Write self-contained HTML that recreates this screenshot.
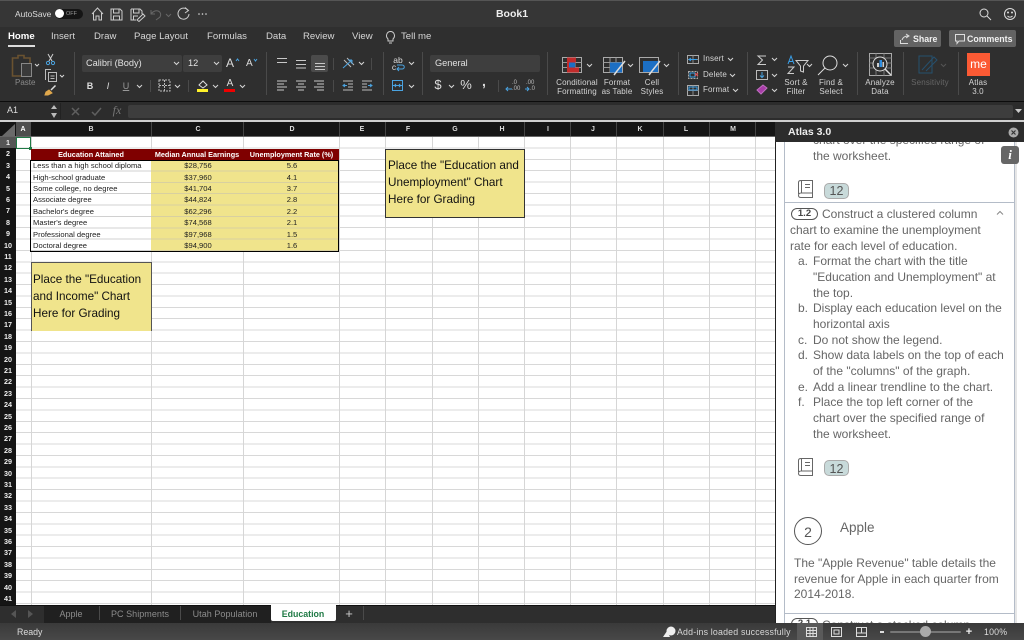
<!DOCTYPE html>
<html><head><meta charset="utf-8"><title>Book1</title>
<style>
html,body{margin:0;padding:0;background:#fff}
#p{position:relative;width:1024px;height:640px;overflow:hidden;font-family:"Liberation Sans",sans-serif;background:#fff}
#p div,#p span.a,#p svg{position:absolute}
.t{position:absolute;white-space:nowrap;line-height:12px;transform:translateY(-6px)}
.c{transform:translate(-50%,-6px);text-align:center}
.rb{color:#d8d8d8;font-size:9.6px}
.tab{color:#d6d6d6;font-size:9.6px;letter-spacing:0}
.lb{color:#d4d4d4;font-size:8px;letter-spacing:.15px}
.sep{width:1px;background:#4a4a4a}
.vl{top:137px;height:468px;width:1px;background:#d6d6d6}
.hd{color:#ddd;font-size:7px;font-weight:bold;top:129.5px}
.rn{left:0;width:16px;text-align:center;color:#eee;font-size:7.2px;font-weight:bold;line-height:11.4px;height:11.4px}
.b{color:#222;font-size:7.6px;left:33px}
.m{color:#222;font-size:7.6px}
.th{color:#fff;font-size:7.25px;font-weight:bold;top:155px}
.n{color:#111;font-size:11.7px}
.q{color:#666;font-size:12px;letter-spacing:0}
</style></head><body><div id="p">

<!-- title bar -->
<div style="left:0;top:0;width:1024px;height:27px;background:#363636;border-top:1px solid #555;box-sizing:border-box"></div>
<span class="t" style="left:15px;top:14px;color:#ddd;font-size:8.4px">AutoSave</span>
<div style="left:55px;top:9px;width:28px;height:10px;border-radius:5px;background:#151515"></div>
<div style="left:55px;top:9px;width:9px;height:9px;border-radius:5px;background:#fff"></div>
<span class="t" style="left:66px;top:14px;color:#999;font-size:5.5px">OFF</span>
<svg style="left:90px;top:5px" width="125" height="18" fill="none" stroke="#ccc" stroke-width="1">
<path d="M2 9L7.5 3L13 9M3.5 8V15H6V11H9V15H11.5V8"/>
<path d="M21 4H30L32 6V15H21ZM23.5 4V8H29V4M23.5 15V11H29.5V15"/>
<path d="M41 4H50L52 6V9M41 4V15H46M43.5 4V8H49V4M43.5 15V11H48M47 15L53 9L55 11L49 16.5Z"/>
<path d="M61 5V9H65M61 9C65 3 73 6 70 12L66 15" stroke="#666"/>
<path d="M76 9L78.5 11.5L81 9" stroke="#666"/>
<path d="M98 5.5A5.5 5.5 0 1 0 99 9M95 2.5L98.5 5.5L95 8"/>
<circle cx="109" cy="9" r=".8" fill="#ddd" stroke="none"/><circle cx="112.500" cy="9" r=".8" fill="#ddd" stroke="none"/><circle cx="116" cy="9" r=".8" fill="#ddd" stroke="none"/>
</svg>
<span class="t c" style="left:512px;top:14px;color:#eee;font-size:10.5px;font-weight:bold">Book1</span>
<svg style="left:976px;top:5px" width="44" height="18" fill="none" stroke="#ddd" stroke-width="1">
<circle cx="8" cy="8" r="4"/><path d="M11 11L15 15"/>
<circle cx="34" cy="9" r="5.5"/><path d="M31.5 11C33 12.5 35 12.5 36.5 11"/><circle cx="32" cy="7.5" r=".5"/><circle cx="36" cy="7.5" r=".5"/>
</svg>

<!-- ribbon -->
<div style="left:0;top:27px;width:1024px;height:74px;background:#2f2f2f"></div>
<div style="left:0;top:101px;width:1024px;height:1px;background:#0c0c0c"></div>
<span class="t tab" style="left:8px;top:37px;color:#fff;font-weight:bold">Home</span>
<div style="left:8px;top:45px;width:27px;height:2px;background:#ddd"></div>
<span class="t tab" style="left:51px;top:37px">Insert</span>
<span class="t tab" style="left:94px;top:37px">Draw</span>
<span class="t tab" style="left:134px;top:37px">Page Layout</span>
<span class="t tab" style="left:207px;top:37px">Formulas</span>
<span class="t tab" style="left:266px;top:37px">Data</span>
<span class="t tab" style="left:303px;top:37px">Review</span>
<span class="t tab" style="left:352px;top:37px">View</span>
<svg style="left:385px;top:30px" width="11" height="14" fill="none" stroke="#ccc"><path d="M3 9C0 6 2 1.5 5.5 1.5S11 6 8 9V11H3ZM4 13H7"/></svg>
<span class="t tab" style="left:401px;top:37px">Tell me</span>

<div style="left:894px;top:30px;width:47px;height:17px;background:#636363;border-radius:2px"></div>
<span class="t" style="left:913px;top:39px;color:#f0f0f0;font-size:8.8px;font-weight:bold">Share</span>
<svg style="left:899px;top:33px" width="12" height="12" fill="none" stroke="#ddd"><path d="M1.5 7V10.5H9M3 7C4 4 6 3 9 3M7 1L10 3L7 5"/></svg>
<div style="left:949px;top:30px;width:67px;height:17px;background:#636363;border-radius:2px"></div>
<span class="t" style="left:967px;top:39px;color:#f0f0f0;font-size:8.8px;font-weight:bold">Comments</span>
<svg style="left:954px;top:33px" width="12" height="12" fill="none" stroke="#ddd"><path d="M1.5 1.5H10.5V8H5L3 10.5V8H1.5Z"/></svg>

<!-- separators -->
<div class="sep" style="left:74px;top:52px;height:43px"></div>
<div class="sep" style="left:266px;top:52px;height:43px"></div>
<div class="sep" style="left:383px;top:52px;height:43px"></div>
<div class="sep" style="left:422px;top:52px;height:43px"></div>
<div class="sep" style="left:547px;top:52px;height:43px"></div>
<div class="sep" style="left:678px;top:52px;height:43px"></div>
<div class="sep" style="left:747px;top:52px;height:43px"></div>
<div class="sep" style="left:857px;top:52px;height:43px"></div>
<div class="sep" style="left:903px;top:52px;height:43px"></div>
<div class="sep" style="left:958px;top:52px;height:43px"></div>
<div class="sep" style="left:150px;top:80px;height:12px"></div>
<div class="sep" style="left:188px;top:80px;height:12px"></div>
<div class="sep" style="left:333px;top:58px;height:12px"></div>
<div class="sep" style="left:333px;top:80px;height:12px"></div>
<div class="sep" style="left:371px;top:58px;height:12px"></div>
<div class="sep" style="left:498px;top:80px;height:12px"></div>

<!-- clipboard -->
<svg style="left:10px;top:53px" width="60" height="45" fill="none" stroke="#a9a9a9" stroke-width="1">
<path d="M2.500 5H8V2.500H14V5H20V23H2.500Z" stroke="#6a5230" stroke-width="1.6"/>
<rect x="11.500" y="10.500" width="10" height="13" fill="#3a3a3a" stroke="#888"/>
<path d="M38 1L42 8M43 1L39 8" stroke="#cfcfcf"/><circle cx="38" cy="10" r="1.6" stroke="#4aa3e0"/><circle cx="43" cy="10" r="1.6" stroke="#4aa3e0"/>
<path d="M35.500 27V16.500H41M38.500 19.500H46.500V28.500H38.500ZM40.500 23H44.500M40.500 25.500H44.500" stroke="#bbb"/>
<path d="M36 39L39 37L42 40L38 42H35Z" fill="#e0a84c" stroke="#e0a84c"/><path d="M41 37L45.500 32.500" stroke="#ddd" stroke-width="1.500"/>
</svg>
<span class="t" style="left:15px;top:83px;color:#8a8a8a;font-size:8px">Paste</span>

<!-- font boxes -->
<div style="left:82px;top:55px;width:100px;height:17px;background:#3e3e3e;border-radius:2px"></div>
<div style="left:183px;top:55px;width:39px;height:17px;background:#3e3e3e;border-radius:2px"></div>
<span class="t" style="left:86px;top:63px;color:#e2e2e2;font-size:9.2px">Calibri (Body)</span>
<span class="t" style="left:188px;top:63px;color:#e2e2e2;font-size:9.2px">12</span>
<span class="t" style="left:226px;top:63px;color:#ddd;font-size:12px">A</span>
<span class="t" style="left:246px;top:64px;color:#ddd;font-size:10px">A</span>
<div style="left:311px;top:55px;width:17px;height:17px;background:#4b4b4b;border-radius:2px"></div>
<svg style="left:0;top:0;pointer-events:none" width="1024" height="102" fill="none" stroke="#d5d5d5" stroke-width="1">
<!-- chevrons -->
<path d="M35 64l2 2 2-2M60 75l2 2 2-2M174 62l2.500 2.500 2.500-2.500M214 62l2.500 2.500 2.500-2.500M137 85l2.500 2.500 2.500-2.500M175 85l2.500 2.500 2.500-2.500M213 85l2.500 2.500 2.500-2.500M240 85l2.500 2.500 2.500-2.500M359 62l2.500 2.500 2.500-2.500M409 62l2.500 2.500 2.500-2.500M409 85l2.500 2.500 2.500-2.500M449 85l2.500 2.500 2.500-2.500M533 62l2.500 2.500 2.500-2.500M587 64l2.500 2.500 2.500-2.500M628 64l2.500 2.500 2.500-2.500M664 64l2.500 2.500 2.500-2.500M728 58l2.500 2.500 2.500-2.500M730 74l2.500 2.500 2.500-2.500M733 89l2.500 2.500 2.500-2.500M772 58l2.500 2.500 2.500-2.500M772 74l2.500 2.500 2.500-2.500M772 89l2.500 2.500 2.500-2.500M807 64l2.500 2.500 2.500-2.500M843 64l2.500 2.500 2.500-2.500"/>
<path d="M236 61l1.500-2 1.500 2M254 59l1.500 2 1.500-2" stroke="#4aa3e0"/>
<path d="M941 64l2.500 2.500 2.500-2.500" stroke="#555"/>
<!-- alignment -->
<g stroke="#c8c8c8"><path d="M277 58.500H287M277 62.500H287M296 60.500H306M296 64.500H306M296 68H306M315 63.500H325M315 66.500H325M315 69.500H325M277 81H287M277 84H284M277 87H287M277 90H284M296 81H306M298 84H304M296 87H306M298 90H304M314 81H324M317 84H324M314 87H324M317 90H324"/></g>
<!-- borders -->
<path stroke-dasharray="2 1" d="M159 80H170V91H159ZM159 85.500H170M164.500 80V91" stroke="#bbb"/>
<!-- indents -->
<path d="M343 81H353M343 90H353M348 84H353M348 87H353" stroke="#bbb"/><path d="M343 85.500H347M345 84L343 85.500L345 87" stroke="#4aa3e0"/>
<path d="M362 81H372M362 90H372M362 84H367M362 87H367" stroke="#bbb"/><path d="M368 85.500H372M370 84L372 85.500L370 87" stroke="#4aa3e0"/>
<!-- orientation -->
<path d="M344 60L351 67M347 58L354 65" stroke="#bbb"/><path d="M343 68L352 60M352 60V64M352 60H348" stroke="#4aa3e0"/>
<!-- wrap / merge -->
<path d="M397 65H402C405 65 405 69 402 69H397M399 67L397 69L399 71" stroke="#4aa3e0"/>
<path d="M392.500 80.500H402.500V90.500H392.500ZM392.500 85.500H402.500M394.500 85.500L396 84M394.500 85.500L396 87M400.500 85.500L399 84M400.500 85.500L399 87" stroke="#4aa3e0"/>
<!-- decimal -->
<path d="M506 89H512M508 87L506 89L508 91M525 89H529M527 87L529 89L527 91" stroke="#4aa3e0"/>
<!-- conditional -->
<rect x="562.500" y="57.500" width="19" height="15" stroke="#aaa"/><path d="M562.500 62.500H581.500M562.500 67.500H581.500M569 57.500V72.500M575 57.500V72.500" stroke="#999"/>
<rect x="567" y="57.500" width="9" height="5" fill="#c22b2b" stroke="none"/><rect x="567" y="67.500" width="12" height="5" fill="#c22b2b" stroke="none"/><rect x="567" y="62.500" width="2" height="5" fill="#c22b2b" stroke="none"/><rect x="569" y="62.500" width="6" height="5" fill="#1c6fc4" stroke="none"/>
<!-- format as table -->
<rect x="603.500" y="57.500" width="19" height="15" stroke="#aaa"/><path d="M603.500 62.500H622.500M603.500 67.500H622.500M610 57.500V72.500M616 57.500V72.500" stroke="#999"/>
<rect x="610" y="62.500" width="12" height="10" fill="#1c6fc4" stroke="none"/>
<path d="M625 61L617 71M617 71L614 75" stroke="#ddd" stroke-width="1.500"/>
<!-- cell styles -->
<rect x="639.500" y="57.500" width="19" height="15" stroke="#aaa"/><rect x="643" y="61" width="15" height="11" fill="#1c6fc4" stroke="none"/>
<path d="M660 61L652 71M652 71L649 75" stroke="#ddd" stroke-width="1.500"/>
<!-- insert delete format -->
<rect x="687.500" y="55.500" width="11" height="8" stroke="#aaa"/><path d="M687.500 59.500H698.500M693 55.500V63.500" stroke="#888"/><path d="M689 59.500H697M691 58L689 59.500L691 61" stroke="#3aa0ea"/>
<rect x="688.500" y="71.500" width="9" height="7" stroke="#aaa" stroke-dasharray="2 1"/><rect x="690" y="73" width="5" height="4" stroke="#3aa0ea"/><path d="M695 73L698 76M698 73L695 76" stroke="#e05050"/>
<rect x="687.500" y="85.500" width="11" height="10" stroke="#aaa"/><path d="M687.500 90.500H698.500M693 85.500V95.500" stroke="#888"/><path d="M689 87H697V90H689Z" stroke="#3aa0ea"/>
<!-- sigma etc -->
<path d="M766 56H758L762.500 60L758 64.500H766" stroke="#ccc"/>
<rect x="756.500" y="70.500" width="11" height="9" stroke="#bbb"/><path d="M762 72V77M760 75.500L762 77.500L764 75.500" stroke="#4aa3e0"/>
<path d="M757 90L763 85L767 88L761 94Z" fill="#a83ca8" stroke="#c070c0"/>
<!-- sort -->
<path d="M788 64L791 56L794 64M789 61.500H793" stroke="#3aa0ea"/><path d="M788 67H794L788 73.500H794" stroke="#ccc"/><path d="M796 60.500H808L803.500 66V72L800.500 71V66Z" stroke="#ccc"/>
<!-- find -->
<circle cx="830" cy="63" r="7" stroke="#ddd"/><path d="M825 68L818 75" stroke="#ddd"/>
<!-- analyze -->
<rect x="869.500" y="53.500" width="22" height="22" stroke="#aaa"/><path d="M869.500 58H891.500M869.500 63H891.500M869.500 68H891.500M876 53.500V75.500M884 53.500V75.500" stroke="#777"/>
<circle cx="880" cy="64" r="7" stroke="#ddd" fill="#2f2f2f"/><rect x="877" y="63" width="2" height="4" fill="#ccc" stroke="none"/><rect x="879.500" y="60" width="2.500" height="7" fill="#2f8ee0" stroke="none"/><rect x="882.500" y="62" width="1.500" height="5" fill="#ccc" stroke="none"/><path d="M885 69L891 75" stroke="#ddd" stroke-width="1.500"/>
<!-- sensitivity -->
<path d="M919 56H932V73H919ZM922 70L934 57L937 60L926 71" stroke="#26506e"/>
</svg>
<span class="t c" style="left:398px;top:60px;color:#ddd;font-size:8.500px">ab</span>
<span class="t c" style="left:394px;top:67px;color:#ddd;font-size:8.500px">c</span>
<span class="t c" style="left:90px;top:86px;color:#ddd;font-size:9px;font-weight:bold">B</span>
<span class="t c" style="left:108px;top:86px;color:#ddd;font-size:9px;font-style:italic">I</span>
<span class="t c" style="left:126px;top:86px;color:#999;font-size:9px;text-decoration:underline">U</span>
<svg style="left:196px;top:78px" width="14" height="14" fill="none" stroke="#ddd"><path d="M3 7L7 3L11 7L7 10Z"/></svg>
<div style="left:197px;top:89px;width:11px;height:3px;background:#fff22a"></div>
<span class="t c" style="left:230px;top:84px;color:#ddd;font-size:10px">A</span>
<div style="left:224px;top:89px;width:11px;height:3px;background:#f00000"></div>

<!-- number -->
<div style="left:430px;top:55px;width:110px;height:17px;background:#3e3e3e;border-radius:2px"></div>
<span class="t" style="left:435px;top:63px;color:#e2e2e2;font-size:9.2px">General</span>
<span class="t c" style="left:438px;top:85px;color:#ddd;font-size:13px">$</span>
<span class="t c" style="left:466px;top:85px;color:#ddd;font-size:13px">%</span>
<span class="t c" style="left:484px;top:81px;color:#ddd;font-size:14px;font-weight:bold">,</span>
<span class="t" style="left:512px;top:83px;color:#bbb;font-size:6px">.0</span>
<span class="t" style="left:512px;top:89px;color:#bbb;font-size:6px">.00</span>
<span class="t" style="left:526px;top:83px;color:#bbb;font-size:6px">.00</span>
<span class="t" style="left:530px;top:89px;color:#bbb;font-size:6px">.0</span>

<!-- labels -->
<span class="t c lb" style="left:577px;top:83px">Conditional</span><span class="t c lb" style="left:577px;top:92px">Formatting</span>
<span class="t c lb" style="left:617px;top:83px">Format</span><span class="t c lb" style="left:617px;top:92px">as Table</span>
<span class="t c lb" style="left:652px;top:83px">Cell</span><span class="t c lb" style="left:652px;top:92px">Styles</span>
<span class="t lb" style="left:703px;top:59px">Insert</span><span class="t lb" style="left:703px;top:75px">Delete</span><span class="t lb" style="left:703px;top:90px">Format</span>
<span class="t c lb" style="left:796px;top:83px">Sort &amp;</span><span class="t c lb" style="left:796px;top:92px">Filter</span>
<span class="t c lb" style="left:831px;top:83px">Find &amp;</span><span class="t c lb" style="left:831px;top:92px">Select</span>
<span class="t c lb" style="left:880px;top:83px">Analyze</span><span class="t c lb" style="left:880px;top:92px">Data</span>
<span class="t c lb" style="left:930px;top:83px;color:#666">Sensitivity</span>
<div style="left:967px;top:53px;width:23px;height:23px;background:#fb5a34"></div>
<span class="t c" style="left:978.500px;top:64px;color:#fff;font-size:12px">me</span>
<span class="t c lb" style="left:978px;top:83px">Atlas</span><span class="t c lb" style="left:978px;top:92px">3.0</span>

<!-- formula bar -->
<div style="left:0;top:102px;width:1024px;height:18px;background:#2c2c2c"></div>
<span class="t" style="left:7px;top:110px;color:#ddd;font-size:9px">A1</span>
<svg style="left:50px;top:104px" width="8" height="15" fill="#bbb"><path d="M4 1L7 5H1ZM4 14L7 9H1Z"/></svg>
<div style="left:60px;top:103px;width:1px;height:16px;background:#222"></div>
<svg style="left:70px;top:105px" width="35" height="12" fill="none" stroke="#5f5f5f" stroke-width="1.500"><path d="M2 3L9 10M9 3L2 10M22 7L25 10L31 3"/></svg>
<span class="t c" style="left:117px;top:110px;color:#777;font-size:12px;font-style:italic;font-family:'Liberation Serif',serif">fx</span>
<div style="left:128px;top:105px;width:885px;height:13px;background:#3d3d3d;border-radius:2px"></div>
<svg style="left:1014px;top:108px" width="9" height="6" fill="#ccc"><path d="M1 1H8L4.500 5Z"/></svg>
<div style="left:0;top:120px;width:1024px;height:2px;background:#cfcfcf"></div>

<!-- column header -->
<div style="left:0;top:122px;width:775px;height:15px;background:#151515;border-bottom:1px solid #666;box-sizing:border-box"></div>
<div style="left:16px;top:122px;width:15px;height:14px;background:#4e4e4e"></div>
<svg style="left:2px;top:124px" width="13" height="12" fill="#6a6a6a"><path d="M13 0V12H0Z"/></svg>
<span class="t c hd" style="left:23px;color:#fff">A</span>
<span class="t c hd" style="left:91px">B</span>
<span class="t c hd" style="left:198px">C</span>
<span class="t c hd" style="left:292px">D</span>
<span class="t c hd" style="left:362px">E</span>
<span class="t c hd" style="left:408px">F</span>
<span class="t c hd" style="left:455px">G</span>
<span class="t c hd" style="left:502px">H</span>
<span class="t c hd" style="left:548px">I</span>
<span class="t c hd" style="left:593px">J</span>
<span class="t c hd" style="left:640px">K</span>
<span class="t c hd" style="left:686px">L</span>
<span class="t c hd" style="left:733px">M</span>
<div style="left:151px;top:122px;width:1px;height:14px;background:#444"></div>
<div style="left:243px;top:122px;width:1px;height:14px;background:#444"></div>
<div style="left:339px;top:122px;width:1px;height:14px;background:#444"></div>
<div style="left:385px;top:122px;width:1px;height:14px;background:#444"></div>
<div style="left:524px;top:122px;width:1px;height:14px;background:#444"></div>
<div style="left:570px;top:122px;width:1px;height:14px;background:#444"></div>
<div style="left:616px;top:122px;width:1px;height:14px;background:#444"></div>
<div style="left:663px;top:122px;width:1px;height:14px;background:#444"></div>
<div style="left:709px;top:122px;width:1px;height:14px;background:#444"></div>
<div style="left:755px;top:122px;width:1px;height:14px;background:#444"></div>

<!-- grid -->
<div style="left:16px;top:137px;width:759px;height:468px;background:repeating-linear-gradient(to bottom,#fff 0,#fff 10.39px,#d8d8d8 10.39px,#d8d8d8 11.39px)"></div>
<div class="vl" style="left:31px"></div><div class="vl" style="left:151px"></div><div class="vl" style="left:243px"></div><div class="vl" style="left:339px"></div><div class="vl" style="left:385px"></div><div class="vl" style="left:432px"></div><div class="vl" style="left:478px"></div><div class="vl" style="left:524px"></div><div class="vl" style="left:570px"></div><div class="vl" style="left:616px"></div><div class="vl" style="left:663px"></div><div class="vl" style="left:709px"></div><div class="vl" style="left:755px"></div>

<!-- row numbers -->
<div style="left:0;top:137px;width:16px;height:468px;background:#151515"></div>
<div style="left:0;top:137px;width:16px;height:11px;background:#555"></div>
<div class="rn" style="top:137px">1</div><div class="rn" style="top:148.400px">2</div><div class="rn" style="top:159.800px">3</div><div class="rn" style="top:171.200px">4</div><div class="rn" style="top:182.600px">5</div><div class="rn" style="top:194px">6</div><div class="rn" style="top:205.400px">7</div><div class="rn" style="top:216.800px">8</div><div class="rn" style="top:228.200px">9</div><div class="rn" style="top:239.600px">10</div><div class="rn" style="top:251px">11</div><div class="rn" style="top:262.400px">12</div><div class="rn" style="top:273.800px">13</div><div class="rn" style="top:285.200px">14</div><div class="rn" style="top:296.600px">15</div><div class="rn" style="top:308px">16</div><div class="rn" style="top:319.400px">17</div><div class="rn" style="top:330.800px">18</div><div class="rn" style="top:342.200px">19</div><div class="rn" style="top:353.600px">20</div><div class="rn" style="top:365px">21</div><div class="rn" style="top:376.400px">22</div><div class="rn" style="top:387.800px">23</div><div class="rn" style="top:399.200px">24</div><div class="rn" style="top:410.600px">25</div><div class="rn" style="top:422px">26</div><div class="rn" style="top:433.400px">27</div><div class="rn" style="top:444.800px">28</div><div class="rn" style="top:456.200px">29</div><div class="rn" style="top:467.600px">30</div><div class="rn" style="top:479px">31</div><div class="rn" style="top:490.400px">32</div><div class="rn" style="top:501.800px">33</div><div class="rn" style="top:513.200px">34</div><div class="rn" style="top:524.600px">35</div><div class="rn" style="top:536px">36</div><div class="rn" style="top:547.400px">37</div><div class="rn" style="top:558.800px">38</div><div class="rn" style="top:570.200px">39</div><div class="rn" style="top:581.600px">40</div><div class="rn" style="top:593px">41</div>

<!-- selection -->
<div style="left:16px;top:137px;width:15px;height:12px;border:1px solid #1f7a45;box-sizing:border-box"></div>
<div style="left:29px;top:147px;width:3px;height:3px;background:#1f7a45"></div>

<!-- table -->
<div style="left:31px;top:149px;width:308px;height:11px;background:#7f0000"></div>
<div style="left:151px;top:160px;width:188px;height:91px;background:#f0e48c"></div>
<div style="left:31px;top:160px;width:120px;height:91px;background:repeating-linear-gradient(to bottom,#fff 0,#fff 10.39px,#d0d0d0 10.39px,#d0d0d0 11.39px)"></div>
<div style="left:151px;top:160px;width:188px;height:91px;background:repeating-linear-gradient(to bottom,#f0e48c 0,#f0e48c 10.39px,#d8d0a0 10.39px,#d8d0a0 11.39px)"></div>
<div style="left:30px;top:160px;width:309px;height:92px;border:1px solid #000;box-sizing:border-box"></div>
<span class="t c th" style="left:91px">Education Attained</span>
<span class="t c th" style="left:197px">Median Annual Earnings</span>
<span class="t c th" style="left:291.500px">Unemployment Rate (%)</span>
<span class="t b" style="top:166px">Less than a high school diploma</span>
<span class="t b" style="top:178px">High-school graduate</span>
<span class="t b" style="top:189px">Some college, no degree</span>
<span class="t b" style="top:200px">Associate degree</span>
<span class="t b" style="top:212px">Bachelor's degree</span>
<span class="t b" style="top:223px">Master's degree</span>
<span class="t b" style="top:235px">Professional degree</span>
<span class="t b" style="top:246px">Doctoral degree</span>
<span class="t c m" style="left:198px;top:166px">$28,756</span><span class="t c m" style="left:198px;top:178px">$37,960</span><span class="t c m" style="left:198px;top:189px">$41,704</span><span class="t c m" style="left:198px;top:200px">$44,824</span><span class="t c m" style="left:198px;top:212px">$62,296</span><span class="t c m" style="left:198px;top:223px">$74,568</span><span class="t c m" style="left:198px;top:235px">$97,968</span><span class="t c m" style="left:198px;top:246px">$94,900</span>
<span class="t c m" style="left:292px;top:166px">5.6</span><span class="t c m" style="left:292px;top:178px">4.1</span><span class="t c m" style="left:292px;top:189px">3.7</span><span class="t c m" style="left:292px;top:200px">2.8</span><span class="t c m" style="left:292px;top:212px">2.2</span><span class="t c m" style="left:292px;top:223px">2.1</span><span class="t c m" style="left:292px;top:235px">1.5</span><span class="t c m" style="left:292px;top:246px">1.6</span>

<!-- note boxes -->
<div style="left:31px;top:262px;width:121px;height:69px;background:#f0e48c;border:1px solid #555;border-bottom:0;box-sizing:border-box"></div>
<span class="t n" style="left:33px;top:280px">Place the "Education</span>
<span class="t n" style="left:33px;top:297px">and Income" Chart</span>
<span class="t n" style="left:33px;top:314px">Here for Grading</span>
<div style="left:385px;top:149px;width:140px;height:69px;background:#f0e48c;border:1px solid #333;box-sizing:border-box"></div>
<span class="t n" style="left:388px;top:166px">Place the "Education and</span>
<span class="t n" style="left:388px;top:183px">Unemployment" Chart</span>
<span class="t n" style="left:388px;top:200px">Here for Grading</span>

<!-- tabs -->
<div style="left:0;top:605px;width:775px;height:18px;background:#2e2e2e;border-top:1px solid #111;box-sizing:border-box"></div>
<div style="left:44px;top:606px;width:227px;height:17px;background:#202020"></div>
<div class="sep" style="left:99px;top:606px;height:14px"></div>
<div class="sep" style="left:180px;top:606px;height:14px"></div>
<div class="sep" style="left:363px;top:606px;height:14px"></div>
<svg style="left:10px;top:609px" width="24" height="10" fill="#555"><path d="M6 1V9L1 5ZM18 1V9L23 5Z"/></svg>
<span class="t c" style="left:71px;top:614px;color:#8c8c8c;font-size:9px">Apple</span>
<span class="t c" style="left:140px;top:614px;color:#8c8c8c;font-size:9px;letter-spacing:.05px">PC Shipments</span>
<span class="t c" style="left:225px;top:614px;color:#8c8c8c;font-size:9px;letter-spacing:.05px">Utah Population</span>
<div style="left:271px;top:605px;width:65px;height:16px;background:#fff;border-radius:0 0 2px 2px"></div>
<span class="t c" style="left:303px;top:614px;color:#1f7a45;font-size:8.800px;font-weight:bold">Education</span>
<span class="t c" style="left:349px;top:614px;color:#ccc;font-size:13px">+</span>

<!-- panel -->
<div style="left:775px;top:122px;width:249px;height:501px;background:#fff;border-left:1px solid #222;box-sizing:border-box"></div>
<div style="left:784px;top:142px;width:231px;height:481px;border-left:1px solid #b4bcc8;border-right:1px solid #b4bcc8;box-sizing:border-box"></div>
<div style="left:1015px;top:142px;width:2px;height:481px;background:#e6e6e6"></div>
<div style="left:785px;top:202px;width:229px;height:1px;background:#b4bcc8"></div>
<div style="left:785px;top:613px;width:229px;height:1px;background:#b4bcc8"></div>
<span class="t q" style="left:813px;top:140px">chart over the specified range of</span>
<div style="left:775px;top:122px;width:249px;height:20px;background:#2c2c2c"></div>
<span class="t" style="left:788px;top:132px;color:#eee;font-size:10.500px;font-weight:bold">Atlas 3.0</span>
<svg style="left:1007px;top:126px" width="13" height="13"><circle cx="6.500" cy="6.500" r="5" fill="#aaa"/><path d="M4.500 4.500L8.500 8.500M8.500 4.500L4.500 8.500" stroke="#333" stroke-width="1.200"/></svg>
<div style="left:1001px;top:146px;width:18px;height:18px;background:#666;border-radius:3px"></div>
<span class="t c" style="left:1010px;top:155px;color:#fff;font-size:13px;font-style:italic;font-family:'Liberation Serif',serif;font-weight:bold">i</span>

<span class="t q" style="left:813px;top:156px">the worksheet.</span>
<svg style="left:797px;top:179px" width="18" height="20" fill="none" stroke="#666"><path d="M1.500 15V3.500C1.500 2 2.500 1.500 4 1.500H15.500V14H4C2.500 14 1.500 15 1.500 16.500S2.500 18.500 4 18.500H15.500V14M4.500 1.500V14M8 5.500H13M8 8.500H13"/></svg>
<div style="left:824px;top:183px;width:25px;height:16px;background:#c8dada;border:1px solid #aaa;border-radius:5px;box-sizing:border-box"></div>
<span class="t c" style="left:836.500px;top:191px;color:#555;font-size:12.500px">12</span>

<div style="left:791px;top:208px;width:27px;height:12px;border:1px solid #555;border-radius:7px;box-sizing:border-box"></div>
<span class="t c" style="left:804.500px;top:214px;color:#444;font-size:9.500px;font-weight:bold">1.2</span>
<span class="t q" style="left:822px;top:214px">Construct a clustered column</span>
<svg style="left:996px;top:210px" width="8" height="6" fill="none" stroke="#888"><path d="M1 4.500L4 1.500L7 4.500"/></svg>
<span class="t q" style="left:790px;top:230px">chart to examine the unemployment</span>
<span class="t q" style="left:790px;top:245.500px">rate for each level of education.</span>
<span class="t q" style="left:798px;top:261px">a.</span><span class="t q" style="left:813px;top:261px">Format the chart with the title</span>
<span class="t q" style="left:813px;top:277px">"Education and Unemployment" at</span>
<span class="t q" style="left:813px;top:292.500px">the top.</span>
<span class="t q" style="left:798px;top:308px">b.</span><span class="t q" style="left:813px;top:308px">Display each education level on the</span>
<span class="t q" style="left:813px;top:324px">horizontal axis</span>
<span class="t q" style="left:798px;top:339.500px">c.</span><span class="t q" style="left:813px;top:339.500px">Do not show the legend.</span>
<span class="t q" style="left:798px;top:355px">d.</span><span class="t q" style="left:813px;top:355px">Show data labels on the top of each</span>
<span class="t q" style="left:813px;top:371px">of the "columns" of the graph.</span>
<span class="t q" style="left:798px;top:386.500px">e.</span><span class="t q" style="left:813px;top:386.500px">Add a linear trendline to the chart.</span>
<span class="t q" style="left:798px;top:402px">f.</span><span class="t q" style="left:813px;top:402px">Place the top left corner of the</span>
<span class="t q" style="left:813px;top:418px">chart over the specified range of</span>
<span class="t q" style="left:813px;top:433.500px">the worksheet.</span>

<svg style="left:797px;top:457px" width="18" height="20" fill="none" stroke="#666"><path d="M1.500 15V3.500C1.500 2 2.500 1.500 4 1.500H15.500V14H4C2.500 14 1.500 15 1.500 16.500S2.500 18.500 4 18.500H15.500V14M4.500 1.500V14M8 5.500H13M8 8.500H13"/></svg>
<div style="left:824px;top:460px;width:25px;height:16px;background:#c8dada;border:1px solid #aaa;border-radius:5px;box-sizing:border-box"></div>
<span class="t c" style="left:836.500px;top:468.500px;color:#555;font-size:12.500px">12</span>

<div style="left:794px;top:517px;width:28px;height:28px;border:1px solid #555;border-radius:50%;box-sizing:border-box"></div>
<span class="t c" style="left:808px;top:532px;color:#555;font-size:14px">2</span>
<span class="t" style="left:840px;top:528px;color:#666;font-size:13.500px">Apple</span>
<span class="t q" style="left:794px;top:563px">The "Apple Revenue" table details the</span>
<span class="t q" style="left:794px;top:578.500px">revenue for Apple in each quarter from</span>
<span class="t q" style="left:794px;top:594px">2014-2018.</span>
<div style="left:791px;top:618px;width:27px;height:12px;border:1px solid #555;border-radius:7px;box-sizing:border-box"></div>
<span class="t c" style="left:804.500px;top:624px;color:#444;font-size:9.500px;font-weight:bold">2.1</span>
<span class="t q" style="left:822px;top:625px">Construct a stacked column</span>

<!-- status -->
<div style="left:0;top:623px;width:1024px;height:17px;background:linear-gradient(#3a3a3a,#484848)"></div>
<span class="t" style="left:17px;top:632px;color:#ddd;font-size:8.800px">Ready</span>
<svg style="left:662px;top:626px" width="14" height="12" fill="#eee"><circle cx="9" cy="5" r="4.500"/><path d="M1 11L5 5L8 11Z"/></svg>
<span class="t" style="left:677px;top:632px;color:#d8d8d8;font-size:8.800px;letter-spacing:.19px">Add-ins loaded successfully</span>
<div style="left:797px;top:623px;width:26px;height:17px;background:#5a5a5a"></div>
<svg style="left:805px;top:625px" width="70" height="13" fill="none" stroke="#ddd"><path d="M1.500 2.500H11.500V11.500H1.500ZM1.500 5.500H11.500M1.500 8.500H11.500M5 2.500V11.500M8 2.500V11.500"/><path d="M26.500 2.500H36.500V11.500H26.500ZM29 5H34V9H29Z"/><path d="M51.500 2.500V11.500H61.500V2.500ZM56.500 2.500V8H51.500M56.500 8H61.500"/></svg>
<div style="left:880px;top:631px;width:4px;height:1.500px;background:#ddd"></div>
<div style="left:890px;top:631px;width:71px;height:2px;background:#777;border-radius:1px"></div>
<div style="left:920px;top:626px;width:11px;height:11px;background:#aaa;border-radius:50%"></div>
<span class="t c" style="left:969px;top:632px;color:#eee;font-size:11px;font-weight:bold">+</span>
<span class="t" style="left:984px;top:632px;color:#ddd;font-size:8.800px;letter-spacing:.2px">100%</span>

</div></body></html>
